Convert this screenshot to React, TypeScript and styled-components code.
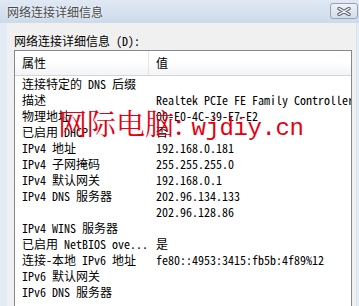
import styled, { createGlobalStyle } from 'styled-components';

const GlobalStyle = createGlobalStyle`
  html, body {
    margin: 0;
    padding: 0;
    background: #f0f0f0;
  }
`;

const listFont = `"Noto Sans Mono CJK SC", "Liberation Mono", "Noto Sans CJK SC", monospace`;

type Row = { name: string; value: string };

const rows: Row[] = [
  { name: '连接特定的 DNS 后缀', value: '' },
  { name: '描述', value: 'Realtek PCIe FE Family Controller' },
  { name: '物理地址', value: '00-E0-4C-39-E7-E2' },
  { name: '已启用 DHCP', value: '否' },
  { name: 'IPv4 地址', value: '192.168.0.181' },
  { name: 'IPv4 子网掩码', value: '255.255.255.0' },
  { name: 'IPv4 默认网关', value: '192.168.0.1' },
  { name: 'IPv4 DNS 服务器', value: '202.96.134.133' },
  { name: '', value: '202.96.128.86' },
  { name: 'IPv4 WINS 服务器', value: '' },
  { name: '已启用 NetBIOS ove...', value: '是' },
  { name: '连接-本地 IPv6 地址', value: 'fe80::4953:3415:fb5b:4f89%12' },
  { name: 'IPv6 默认网关', value: '' },
  { name: 'IPv6 DNS 服务器', value: '' },
];

const App = () => {
  return (
    <Window>
      <GlobalStyle />
      <TitleBar>
        <Title>网络连接详细信息</Title>
        <CloseButton>
          <svg width="14" height="9" viewBox="0 0 14 9">
            <path d="M2 1.5 L12 7.5 M12 1.5 L2 7.5" stroke="#5f6877" strokeWidth="3.4" strokeLinecap="round" />
            <path d="M2 1.5 L12 7.5 M12 1.5 L2 7.5" stroke="#ffffff" strokeWidth="1.4" strokeLinecap="round" />
          </svg>
        </CloseButton>
      </TitleBar>
      <Frame>
        <Body>
          <Label>网络连接详细信息 (D):</Label>
          <ListBox>
            <Header>
              <HeaderCell>属性</HeaderCell>
              <HeaderCell $last>值</HeaderCell>
            </Header>
            {rows.map((r, i) => (
              <ListRow key={i}>
                <Cell>{r.name}</Cell>
                <Cell>{r.value}</Cell>
              </ListRow>
            ))}
          </ListBox>
        </Body>
      </Frame>
      <Watermark>
        网际电脑:<WatermarkLatin>wjdiy.cn</WatermarkLatin>
      </Watermark>
    </Window>
  );
};
export default App;

const Window = styled.div`
  position: relative;
  display: flex;
  flex-direction: column;
  width: 359px;
  height: 306px;
  overflow: hidden;
  background: #dfe8f3;
`;

const TitleBar = styled.div`
  display: flex;
  align-items: flex-start;
  justify-content: space-between;
  height: 23px;
  padding: 0 1px 0 7px;
  box-sizing: border-box;
  background: linear-gradient(#e0e9f4, #ccdaea);
`;

const Title = styled.div`
  margin-top: 4px;
  color: #4a4a4a;
  font-family: "Noto Sans CJK SC", sans-serif;
  font-size: 12px;
  line-height: 16px;
  text-shadow: 0 0 3px #ffffff;
`;

const CloseButton = styled.div`
  display: flex;
  align-items: center;
  justify-content: center;
  margin-top: 3px;
  width: 28px;
  height: 16px;
  box-sizing: border-box;
  border: 1px solid #97a3b4;
  border-radius: 3px;
  background: linear-gradient(#eef2f8, #d3dce9);
`;

const Frame = styled.div`
  display: flex;
  flex: 1;
  padding: 0 2px 0 7px;
  min-height: 0;
  background: #e3ebf5;
`;

const Body = styled.div`
  display: flex;
  flex-direction: column;
  flex: 1;
  padding: 10px 4px 0 7px;
  background: #f0f0f0;
  border-right: 1px solid #dde3ea;
  min-height: 0;
`;

const Label = styled.div`
  color: #000;
  font-family: ${listFont};
  font-size: 12px;
  line-height: 16px;
  margin-bottom: 1px;
  white-space: nowrap;
`;

const ListBox = styled.div`
  flex: 1;
  border: 1px solid #828790;
  border-bottom: none;
  background: #fff;
  overflow: hidden;
  font-family: ${listFont};
  font-size: 12px;
  color: #000;
`;

const Header = styled.div`
  display: grid;
  grid-template-columns: 134px 1fr;
  height: 24px;
  border-bottom: 1px solid #d5d5d5;
  background: linear-gradient(#ffffff 0%, #ffffff 45%, #f3f4f6 100%);
`;

const HeaderCell = styled.div<{ $last?: boolean }>`
  display: flex;
  align-items: center;
  padding-left: 7px;
  border-right: ${(p) => (p.$last ? 'none' : '1px solid #e3e5e8')};
  line-height: 16px;
`;

const ListRow = styled.div`
  display: grid;
  grid-template-columns: 134px 1fr;
  height: 16px;
  line-height: 16px;
`;

const Cell = styled.div`
  padding-left: 7px;
  white-space: nowrap;
  overflow: hidden;
`;

const Watermark = styled.div`
  position: absolute;
  left: 58px;
  top: 106px;
  color: #e60012;
  font-family: "Noto Serif CJK SC", "Noto Sans CJK SC", serif;
  font-size: 29px;
  line-height: 34px;
  white-space: nowrap;
`;

const WatermarkLatin = styled.span`
  margin-left: 8px;
  font-family: "Liberation Mono", monospace;
  font-size: 24px;
  letter-spacing: -0.4px;
`;
